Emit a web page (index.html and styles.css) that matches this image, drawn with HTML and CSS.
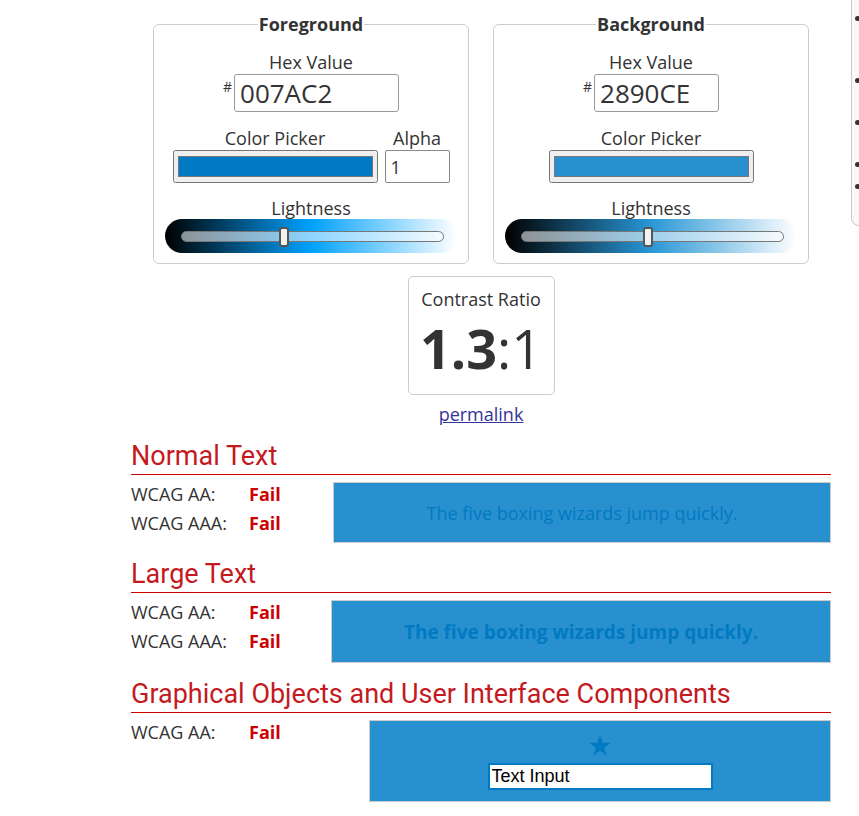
FILE: index.html
```html
<!DOCTYPE html>
<html lang="en">

<head>
    <meta charset="UTF-8">
    <meta name="viewport" content="width=device-width, initial-scale=1.0">
    <title>Contrast Checker</title>
    <link rel="stylesheet" href="styles.css">
</head>

<body>
    <div class="page">
        <main class="checker">
            <!-- Foreground / background colour inputs -->
            <div class="pickers">
                <fieldset class="color-set">
                    <legend>Foreground</legend>
                    <label class="field-label" for="fcolor">Hex Value</label>
                    <div class="hex-row">
                        <span class="hash">#</span>
                        <input class="hex-input hex-fg" id="fcolor" type="text" value="007AC2">
                    </div>
                    <div class="picker-row">
                        <div class="picker-col">
                            <label class="field-label" for="fpicker">Color Picker</label>
                            <input class="color-input" id="fpicker" type="color" value="#007ac2">
                        </div>
                        <div class="picker-col">
                            <label class="field-label" for="falpha">Alpha</label>
                            <input class="alpha-input" id="falpha" type="text" value="1">
                        </div>
                    </div>
                    <div class="field-label lightness-label">Lightness</div>
                    <div class="lightness lightness-fg">
                        <div class="track"><span class="thumb" style="left: 37%"></span></div>
                    </div>
                </fieldset>

                <fieldset class="color-set">
                    <legend>Background</legend>
                    <label class="field-label" for="bcolor">Hex Value</label>
                    <div class="hex-row">
                        <span class="hash">#</span>
                        <input class="hex-input hex-bg" id="bcolor" type="text" value="2890CE">
                    </div>
                    <div class="picker-row">
                        <div class="picker-col">
                            <label class="field-label" for="bpicker">Color Picker</label>
                            <input class="color-input" id="bpicker" type="color" value="#2890ce">
                        </div>
                    </div>
                    <div class="field-label lightness-label">Lightness</div>
                    <div class="lightness lightness-bg">
                        <div class="track"><span class="thumb" style="left: 46.5%"></span></div>
                    </div>
                </fieldset>
            </div>

            <!-- Ratio -->
            <div class="ratio-box">
                <div class="field-label">Contrast Ratio</div>
                <div class="ratio"><b>1.3</b>:1</div>
            </div>
            <div class="permalink"><a href="#">permalink</a></div>

            <!-- Results -->
            <section class="result">
                <h2>Normal Text</h2>
                <div class="result-row">
                    <div class="levels">
                        <div class="level"><span class="level-name">WCAG AA:</span><span class="fail">Fail</span></div>
                        <div class="level"><span class="level-name">WCAG AAA:</span><span class="fail">Fail</span></div>
                    </div>
                    <div class="sample sample-normal">The five boxing wizards jump quickly.</div>
                </div>
            </section>

            <section class="result">
                <h2>Large Text</h2>
                <div class="result-row">
                    <div class="levels levels-large">
                        <div class="level"><span class="level-name">WCAG AA:</span><span class="fail">Fail</span></div>
                        <div class="level"><span class="level-name">WCAG AAA:</span><span class="fail">Fail</span></div>
                    </div>
                    <div class="sample sample-large">The five boxing wizards jump quickly.</div>
                </div>
            </section>

            <section class="result">
                <h2>Graphical Objects and User Interface Components</h2>
                <div class="result-row">
                    <div class="levels levels-ui">
                        <div class="level"><span class="level-name">WCAG AA:</span><span class="fail">Fail</span></div>
                    </div>
                    <div class="sample sample-ui">
                        <svg class="star" width="22" height="21" viewBox="0 0 24 23" aria-hidden="true">
                            <polygon points="12,0 14.8,8.6 23.8,8.6 16.5,13.9 19.3,22.6 12,17.2 4.7,22.6 7.5,13.9 0.2,8.6 9.2,8.6" fill="#007AC2"/>
                        </svg>
                        <input class="ui-input" type="text" value="Text Input">
                    </div>
                </div>
            </section>
        </main>

        <aside class="sidebar">
            <ul>
                <li>Enter colors in RGB hexadecimal format or choose one with the color picker.</li>
                <li>Set alpha below 1 to test transparency.</li>
                <li>Use the sliders to adjust lightness.</li>
                <li>Permalinks save colors.</li>
                <li>Ratios round down.</li>
            </ul>
        </aside>
    </div>
</body>

</html>
```

FILE: styles.css
```css
body {
    margin: 0;
    font-family: "Open Sans", sans-serif;
    color: #333;
    background-color: #fff;
    overflow-x: hidden;
}

.page {
    display: flex;
    gap: 20px;
    padding-left: 131px;
}

.checker {
    flex: 0 0 700px;
    padding-top: 12px;
}

/* colour inputs */
.pickers {
    display: flex;
    justify-content: center;
    gap: 24px;
}

.color-set {
    width: 316px;
    min-width: 0;
    box-sizing: border-box;
    margin: 0;
    padding: 14px 10px 10px;
    border: 1px solid #ccc;
    border-radius: 6px;
    text-align: center;
}

legend {
    margin: 0 auto;
    padding: 0 1px;
    font-size: 18px;
    font-weight: bold;
    line-height: 24px;
}

.field-label {
    display: block;
    font-size: 18px;
    line-height: 24px;
}

.hex-row {
    display: flex;
    justify-content: center;
    align-items: flex-start;
    gap: 2px;
}

.hash {
    font-size: 14px;
    line-height: 14px;
    margin-top: 6px;
}

.hex-input {
    height: 38px;
    box-sizing: border-box;
    padding: 0 5px;
    font-family: "Open Sans", sans-serif;
    font-size: 26px;
    color: #333;
    border: 1px solid #999;
    border-radius: 3px;
}

.hex-fg {
    width: 165px;
}

.hex-bg {
    width: 125px;
}

.picker-row {
    display: flex;
    justify-content: center;
    gap: 7px;
    margin-top: 14px;
}

.color-input {
    display: block;
    width: 205px;
    height: 33px;
    box-sizing: border-box;
    margin: 0;
}

.alpha-input {
    display: block;
    width: 65px;
    height: 33px;
    box-sizing: border-box;
    padding: 0 5px;
    font-family: "Open Sans", sans-serif;
    font-size: 18px;
    color: #333;
    border: 1px solid #888;
    border-radius: 2px;
}

.lightness-label {
    margin-top: 13px;
}

.lightness {
    display: flex;
    align-items: center;
    width: 292px;
    height: 34px;
    box-sizing: border-box;
    margin: -1px auto 0;
    padding: 0 13px 0 16px;
    border-radius: 17px;
}

.lightness-fg {
    background: linear-gradient(to right, #000, hsl(202, 100%, 50%), #fff);
}

.lightness-bg {
    background: linear-gradient(to right, #000, hsl(202, 68%, 50%), #fff);
}

.track {
    position: relative;
    flex: 1;
    height: 11px;
    box-sizing: border-box;
    border: 1px solid #777;
    border-radius: 6px;
    background-color: rgba(255, 255, 255, 0.55);
}

.thumb {
    position: absolute;
    top: -5px;
    width: 10px;
    height: 20px;
    box-sizing: border-box;
    border: 2px solid #555;
    border-radius: 3px;
    background-color: #f2f2f2;
}

/* ratio */
.ratio-box {
    width: 147px;
    box-sizing: border-box;
    margin: 12px auto 0;
    padding: 10px 0 14px;
    border: 1px solid #ccc;
    border-radius: 5px;
    text-align: center;
}

.ratio {
    margin-top: 5px;
    font-size: 54px;
    line-height: 64px;
}

.permalink {
    margin-top: 7px;
    text-align: center;
    font-size: 18px;
    line-height: 24px;
}

.permalink a {
    color: #333399;
}

/* results */
.result h2 {
    margin: 13px 0 7px;
    padding-bottom: 1px;
    font-family: Roboto, sans-serif;
    font-size: 27px;
    font-weight: normal;
    line-height: 34px;
    color: #c41a1f;
    border-bottom: 1px solid #cc0000;
}

.result + .result h2 {
    margin-top: 14px;
}

.result-row {
    display: flex;
}

.levels {
    flex: 0 0 202px;
    font-size: 18px;
}

.levels-large {
    flex-basis: 200px;
}

.levels-ui {
    flex-basis: 238px;
}

.level {
    line-height: 24px;
}

.level + .level {
    margin-top: 5px;
}

.level-name {
    display: inline-block;
    width: 118px;
}

.fail {
    font-weight: bold;
    color: #cc0000;
}

.sample {
    flex: 1;
    display: flex;
    flex-direction: column;
    align-items: center;
    justify-content: center;
    box-sizing: border-box;
    border: 1px solid #ccc;
    background-color: #2890ce;
    color: #007ac2;
}

.sample-normal {
    height: 61px;
    font-size: 18px;
}

.sample-large {
    height: 63px;
    font-size: 19px;
    font-weight: bold;
}

.sample-ui {
    height: 82px;
    justify-content: flex-start;
    padding-top: 14px;
}

.star {
    display: block;
}

.ui-input {
    width: 225px;
    height: 27px;
    box-sizing: border-box;
    margin-top: 7px;
    padding: 0 2px;
    font-family: "Liberation Sans", Arial, sans-serif;
    font-size: 18px;
    color: #000;
    border: 2px solid #007ac2;
    background-color: #fff;
}

/* side panel */
.sidebar {
    flex: 0 0 240px;
    align-self: flex-start;
    padding: 9px 0 25px;
    border: 1px solid #ccc;
    border-top: none;
    border-radius: 0 0 8px 8px;
    background-color: #f9f9f9;
}

.sidebar ul {
    margin: 0;
    padding-left: 20px;
    font-size: 14px;
    line-height: 19.5px;
}

.sidebar li {
    margin-bottom: 3px;
}
```
